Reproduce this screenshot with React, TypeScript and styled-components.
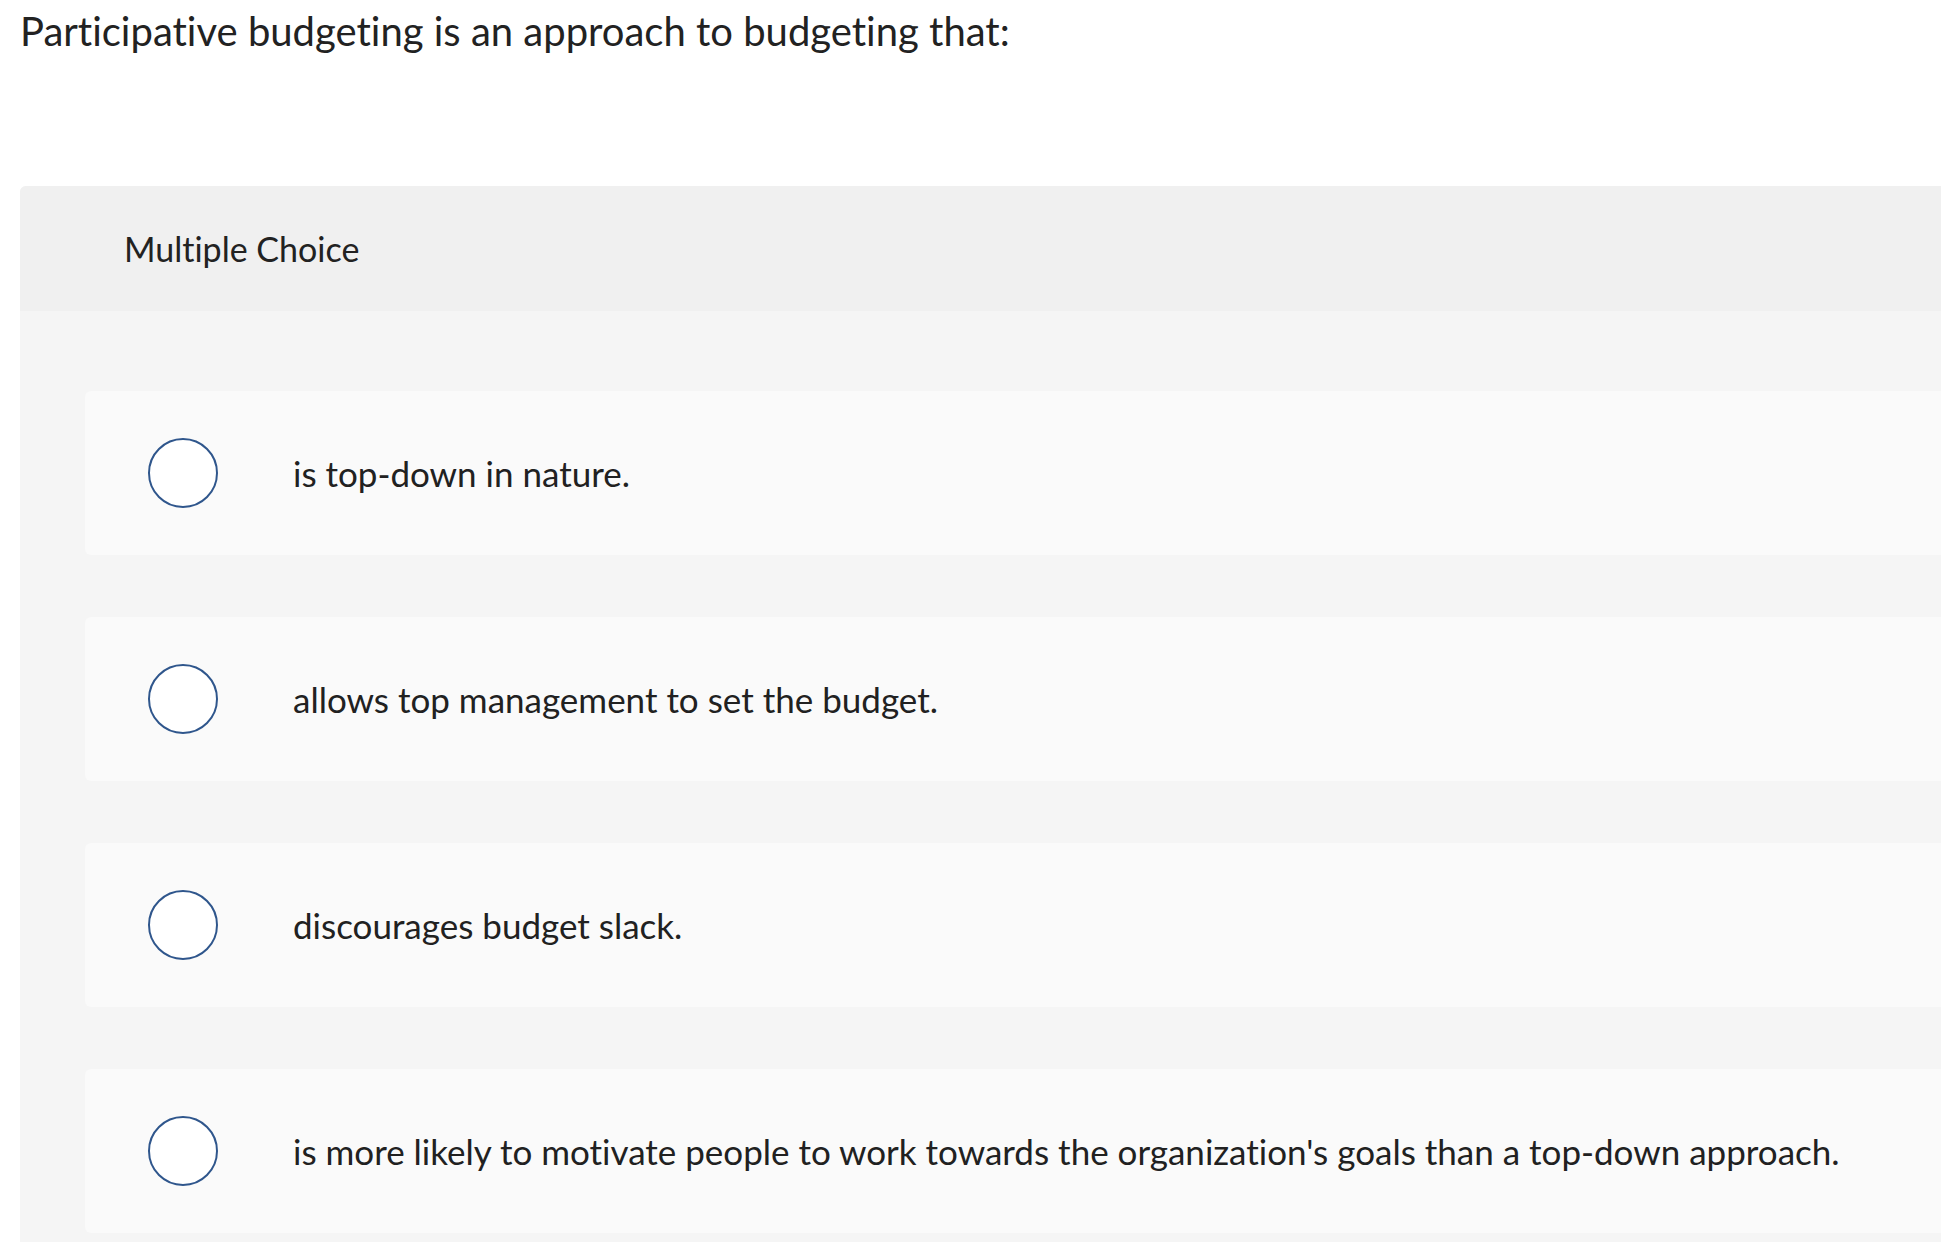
import React from "react"
import styled, { createGlobalStyle } from "styled-components"

const GlobalStyle = createGlobalStyle`
  html, body {
    margin: 0;
    padding: 0;
    background: #fff;
    overflow: hidden;
  }
  body {
    font-family: Lato, "Open Sans", Arial, sans-serif;
    font-variant-ligatures: none;
    color: #212121;
  }
`

const options = [
  "is top-down in nature.",
  "allows top management to set the budget.",
  "discourages budget slack.",
  "is more likely to motivate people to work towards the organization's goals than a top-down approach.",
]

export default function App() {
  return (
    <S.Page>
      <GlobalStyle />
      <S.Question>Participative budgeting is an approach to budgeting that:</S.Question>
      <S.Panel>
        <S.Header>Multiple Choice</S.Header>
        <S.List>
          {options.map((text, i) => (
            <S.Choice key={i}>
              <S.Radio />
              <S.Label>{text}</S.Label>
            </S.Choice>
          ))}
        </S.List>
      </S.Panel>
    </S.Page>
  )
}

const S = {
  Page: styled.div`
    padding-left: 20px;
    width: 1921px;
  `,
  Question: styled.h1`
    margin: 0 0 124px 0;
    font-size: 40px;
    font-weight: 400;
    line-height: 62px;
    color: #222;
  `,
  Panel: styled.div`
    background: #f5f5f5;
    border-top-left-radius: 6px;
    min-height: 1100px;
  `,
  Header: styled.div`
    display: flex;
    align-items: center;
    height: 125px;
    padding-left: 104px;
    background: #f0f0f0;
    border-top-left-radius: 6px;
    font-size: 34px;
    color: #222;
  `,
  List: styled.div`
    display: flex;
    flex-direction: column;
    gap: 62px;
    padding: 80px 0 0 65px;
  `,
  Choice: styled.div`
    display: flex;
    align-items: center;
    gap: 75px;
    height: 164px;
    padding-left: 63px;
    background: #fafafa;
    border-radius: 6px 0 0 6px;
  `,
  Radio: styled.span`
    flex: none;
    box-sizing: border-box;
    width: 70px;
    height: 70px;
    border: 2.5px solid #2f568c;
    border-radius: 50%;
    background: #fff;
  `,
  Label: styled.span`
    font-size: 35px;
    color: #212121;
  `,
}
